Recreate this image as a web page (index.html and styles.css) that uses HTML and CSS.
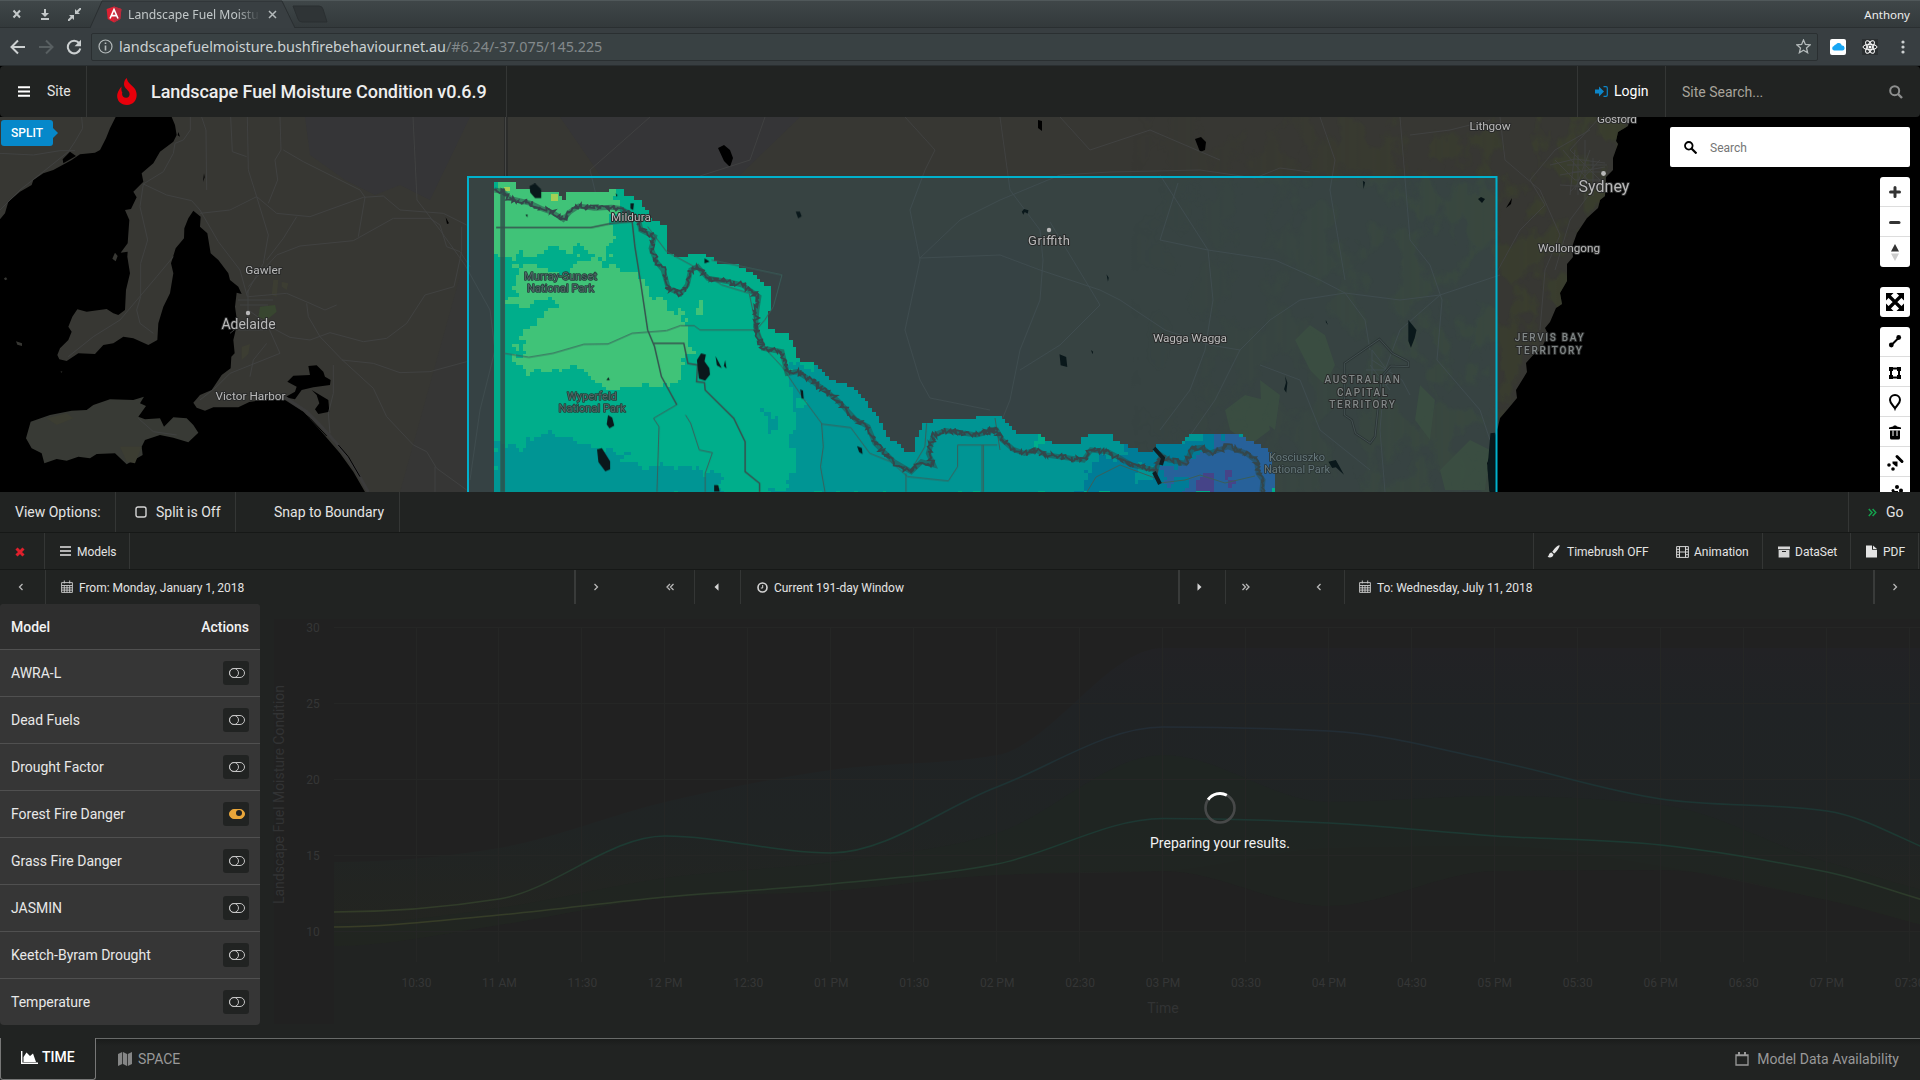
FILE: index.html
```html
<!DOCTYPE html>
<html lang="en">
<head>
<meta charset="utf-8">
<title>Landscape Fuel Moisture Condition</title>
<link rel="stylesheet" href="styles.css">
</head>
<body>
<div class="window">
  <div class="titlebar">
    <div class="win-buttons">
      <svg width="10" height="10" viewBox="0 0 10 10"><path d="M1.5 1.5l6.5 7M8 1.5l-6.5 7" stroke="#c3c8c9" stroke-width="2"/></svg>
      <svg width="10" height="12" viewBox="0 0 10 12"><path d="M5 1v6M1 11h8" stroke="#c3c8c9" stroke-width="2"/><path d="M1 5h8l-4 4z" fill="#c3c8c9"/></svg>
      <svg width="13" height="13" viewBox="0 0 13 13"><path d="M13 0L9 4M0 13l4-4" stroke="#c3c8c9" stroke-width="2"/><path d="M7 1v5h5zM1 7h5v5z" fill="#c3c8c9"/></svg>
    </div>
    <div class="tab">
      <svg class="tab-shape" width="206" height="28" viewBox="0 0 206 28"><path d="M0 28L12 1H192L205 28z" fill="#393f42"/><path d="M0 28L12 1H192L205 28" fill="none" stroke="#2a2f31"/></svg>
      <svg width="16" height="17" viewBox="0 0 16 17"><path d="M8 .5l7.4 2.6-1.1 9.8L8 16.5l-6.3-3.6L.6 3.1z" fill="#dd2032"/><path d="M8 .5l7.4 2.6-1.1 9.8L8 16.5z" fill="#b92a3c"/><path d="M4 12.5L8 3.5l4 9M5.6 9.6h4.8" fill="none" stroke="#fff" stroke-width="1.6"/></svg>
      <span class="tab-title">Landscape Fuel Moisture</span>
      <svg width="9" height="9" viewBox="0 0 9 9"><path d="M1 1l7 7M8 1L1 8" stroke="#b4babb" stroke-width="1.5"/></svg>
    </div>
    <svg class="newtab" width="36" height="18" viewBox="0 0 36 18"><path d="M1 1h26q3 0 4 3l4 13H10q-3 0-4-3z" fill="#2f3436" stroke="#2a2f31"/></svg>
    <span class="user">Anthony</span>
  </div>
  <div class="toolbar">
    <svg width="16" height="16" viewBox="0 0 16 16"><path d="M15 8H2M8 1.5L1.5 8 8 14.500" fill="none" stroke="#ccd0d1" stroke-width="2"/></svg>
    <svg width="16" height="16" viewBox="0 0 16 16"><path d="M1 8h13M8 1.500L14.500 8 8 14.500" fill="none" stroke="#585f61" stroke-width="2"/></svg>
    <svg width="16" height="16" viewBox="0 0 16 16"><path d="M13 4A6.300 6.300 0 1 0 14.300 9.500" fill="none" stroke="#ccd0d1" stroke-width="2"/><path d="M15 .8v6.400H8.600z" fill="#ccd0d1"/></svg>
    <div class="omnibox">
      <svg width="15" height="15" viewBox="0 0 15 15"><circle cx="7.500" cy="7.500" r="6.500" fill="none" stroke="#b4babb" stroke-width="1.200"/><path d="M7.500 6.500v5M7.500 3.400v1.700" stroke="#b4babb" stroke-width="1.600"/></svg>
      <span class="url">landscapefuelmoisture.bushfirebehaviour.net.au<i>/#6.24/-37.075/145.225</i></span>
      <svg width="15" height="15" viewBox="0 0 15 15"><path d="M7.500 1l1.900 4.500 4.700.4-3.600 3.100 1.100 4.700-4.100-2.500-4.100 2.500 1.100-4.700L.9 5.900l4.700-.4z" fill="none" stroke="#b4babb" stroke-width="1.300"/></svg>
    </div>
    <svg width="16" height="16" viewBox="0 0 16 16"><rect width="16" height="16" rx="2" fill="#fff"/><path d="M4 11.500a2.300 2.300 0 0 1 0-4.500 2 2 0 0 1 2-1.500 3.200 3.200 0 0 1 5.800 1 2.500 2.500 0 0 1 .5 5z" fill="#16a5f3"/></svg>
    <svg width="16" height="16" viewBox="0 0 16 16"><rect width="16" height="16" fill="#2b2f31"/><g fill="none" stroke="#fff" stroke-width="1"><ellipse cx="8" cy="8" rx="7" ry="2.700"/><ellipse cx="8" cy="8" rx="7" ry="2.700" transform="rotate(60 8 8)"/><ellipse cx="8" cy="8" rx="7" ry="2.700" transform="rotate(120 8 8)"/></g><circle cx="8" cy="8" r="1.500" fill="#fff"/></svg>
    <svg width="4" height="14" viewBox="0 0 4 14" fill="#ccd0d1"><circle cx="2" cy="2" r="1.600"/><circle cx="2" cy="7" r="1.600"/><circle cx="2" cy="12" r="1.600"/></svg>
  </div>

  <header class="header">
    <div class="site"><svg width="12" height="11" viewBox="0 0 12 11"><path d="M0 1.200h12M0 5.500h12M0 9.800h12" stroke="#fff" stroke-width="2"/></svg>Site</div>
    <div class="brand">
      <svg width="20" height="27" viewBox="0 0 20 27"><path d="M10 0c-.5 4 5 7 8 11 4 7 .5 16-8 16C2.500 27-1 21 .5 15.500 1.300 12.500 3 10.500 4.500 8.500 4.200 12 4.500 13.500 5.300 14.500c-1 3.500 1.500 5.500 4 5.300 3-.3 4-3.300 2.700-5.800C10.500 11.500 7 9.500 7 6 7 3.500 8 1 10 0z" fill="#e8000b"/></svg>
      <h1>Landscape Fuel Moisture Condition v0.6.9</h1>
    </div>
    <div class="login"><svg width="13" height="11" viewBox="0 0 13 11"><path d="M0 3.500h4V.5l5 5-5 5v-3H0z" fill="#0d86c9"/><path d="M8.500.7H11q1.300 0 1.300 1.300v7q0 1.300-1.300 1.300H8.500" fill="none" stroke="#0d86c9" stroke-width="1.200"/></svg>Login</div>
    <div class="sitesearch"><span>Site Search...</span><svg width="14" height="14" viewBox="0 0 14 14"><circle cx="5.700" cy="5.700" r="4.500" fill="none" stroke="#8d8e8e" stroke-width="2"/><path d="M9 9l4 4" stroke="#8d8e8e" stroke-width="2.400"/></svg></div>
  </header>

  <main class="map">
    <svg class="basemap" width="1920" height="375" viewBox="0 117 1920 375">
      <defs>
        <clipPath id="land"><path d="M0 117H1630L1628 126 1618 132 1616 141 1618 144 1613 158 1613 170 1606 177 1605 196 1600 200 1598 208 1587 218 1577 233 1572 247 1573 257 1567 264 1567 281 1560 293 1562 304 1556 308 1550 322 1545 328 1548 334 1541 350 1534 354 1526 363 1527 372 1516 390 1517 398 1507 410 1500 418 1498 427 1492 443 1491 452 1487 463 1490 492H0z"/></clipPath>
        <filter id="patches" x="0" y="0" width="100%" height="100%" color-interpolation-filters="sRGB"><feTurbulence type="fractalNoise" baseFrequency=".03 .022" numOctaves="4" seed="8"/><feColorMatrix values="0 0 0 0 .235 0 0 0 0 .265 0 0 0 0 .17 0 0 0 9 -4.300"/></filter>
        <linearGradient id="hills"><stop offset="0" stop-color="#fff" stop-opacity="0"/><stop offset=".5" stop-color="#fff" stop-opacity=".5"/><stop offset="1" stop-color="#fff"/></linearGradient>
        <mask id="east"><rect x="1130" y="117" width="500" height="375" fill="url(#hills)"/></mask>
      </defs>
      <rect y="117" width="1920" height="375" fill="#000"/>
      <g clip-path="url(#land)">
        <rect y="117" width="1640" height="375" fill="#373733"/>
        <path d="M305 117H470L430 200 400 185 375 195 345 180 310 155zM560 117H800L740 175H600z" fill="#353537"/>
        <path d="M470 240h560v252H400z" fill="#363635"/>
        <g mask="url(#east)"><rect x="1100" y="117" width="530" height="375" filter="url(#patches)" opacity=".6"/></g>
        <path d="M1295 340L1310 325 1325 335 1335 365 1325 385 1310 370zM1225 410L1245 395 1265 400 1270 430 1250 445 1230 430zM1260 380L1280 395 1275 430 1262 420zM1420 385L1435 400 1430 440 1415 420zM1440 470L1470 440 1490 450 1485 490H1445z" fill="#3b4532" opacity=".8"/>
      </g>
      <!-- South Australian gulfs, Kangaroo Island and the lower lakes -->
      <g transform="translate(0 110) scale(.33333)">
        <path d="M347 21L330 55 318 85 300 120 285 128 240 133 215 150 160 180 130 190 100 210 95 225 60 245 25 275 15 310 0 328V1146H1095L1060 1085 1020 1030 960 960 910 905 855 870 800 868 748 876 715 892 640 892 615 902 590 893 580 878 600 855 635 840 665 795 692 775 694 740 704 730 700 690 712 640 705 590 710 548 725 552 715 530 690 510 685 490 655 450 632 430 622 370 600 350 602 320 580 302 565 325 553 355 552 385 527 415 513 460 520 490 510 550 490 590 475 640 472 690 445 705 400 685 370 680 340 700 310 705 285 732 235 730 200 753 178 748 172 735 180 715 205 690 215 665 205 650 217 620 232 598 260 605 320 597 340 610 355 615 375 600 378 540 390 490 382 440 383 425 362 428 383 400 388 330 375 300 393 297 410 262 400 245 430 215 425 190 460 160 480 125 520 95 530 75 525 45 515 21z"/>
        <path d="M92 935L150 915 215 902 260 900 280 885 330 868 400 870 432 860 420 880 438 888 415 920 435 928 480 925 492 950 520 922 560 925 580 945 595 968 565 997 520 983 480 975 435 990 425 1010 428 1035 380 1063 345 1030 290 1032 270 1045 235 1040 200 1052 170 1047 133 1060 125 1030 95 1015 78 985z" fill="#383a35"/>
        <path d="M862 815L880 797 930 795 925 768 950 766 970 785 975 800 992 810 990 825 940 832 905 840 885 868 855 862 885 845 890 830zM935 840L985 870 988 905 955 912 945 898 958 880 950 855zM188 148L210 125 228 138 190 160zM1337 322l10 18-6 2zM612 190l2 12-5 14zM535 66l5 14-7-4z"/>
        <path d="M345 428l8 10-6 16-10-8zM48 694l18 6 0 8-14-4zM12 505l6-3 4 6-7 3zM181 785l6-1-2 4z" fill="#373733"/>
        <path d="M855 862L920 905 965 950 1010 1000 1065 1075 1105 1146" fill="none" stroke="#3b3b3b" stroke-width="9"/>
        <path d="M905 905L930 925 980 978M1015 1005L1045 1040 1080 1100" fill="none" stroke="#000" stroke-width="3"/>
        <path d="M780 590l45-5 5 20-30 25-25-10z" fill="#384630"/>
        <path d="M725 710l25-8-5 30-20 18zM820 510l15 0-5 50-15-5zM140 925l60-15 20 15-50 20zM845 515l20 5-5 20-15-10zM360 1010l65 0-20 50-25-5z" fill="#3c3d32"/>
        <g class="roads"><path d="M245 21L248 55 225 95 205 125 130 185 60 240 0 300M0 130L100 135 180 122 225 122M571 21V60L550 90 525 100 520 130 490 185 430 222 420 290 443 390 422 460 422 560 410 600 420 640 460 670M430 222L500 255 575 272 600 300 655 395 720 480 742 560M600 310L690 300 770 260 830 310 930 320 1090 262 1150 258 1200 300 1330 310 1400 345M692 21L697 125 740 140M742 21L745 180 770 260 805 375 790 460 740 550M840 21L843 120 825 150 833 210 805 280M850 120L910 155 1000 200 1080 240 1095 262 1075 380M745 530L830 435 900 408 1060 392 1180 325 1290 325 1320 345 1340 410 1380 425 1410 470M1385 350V425L1362 530 1275 555 1220 640 1160 685 1090 695 990 668 930 690 870 682 810 650M890 320L850 385 800 450M920 580L925 620 960 680 1025 748 1120 835 1160 920 1240 1005 1280 1025 1310 1075 1400 1140M1025 750L1120 760 1200 788 1290 785 1400 755M745 560L860 550 930 580 975 600 1010 585M745 600L800 640 840 730 690 790 650 830 600 870M800 700L760 750 750 800M1000 765L1000 850 985 910 990 970M205 740L280 680 360 630 470 500 520 440M690 670L715 650 800 660M605 21L618 60 620 240M1305 1070V1146M415 925L460 965 530 975"/></g>
      </g>
      <!-- lakes and highways of New South Wales -->
      <path d="M718 148l6-3 6 5 3 8-3 9-6-6zM1038 120l4 1 0 10-4-3zM1195 139l6-2 5 5-1 8-5 2zM1478 199l3-2 4 2-3 4zM1506 208l6-10-1 6M1385 116l6 0z"/>
      <g class="roads"><path d="M413 117L417 200 440 230 465 265 490 310 495 350 480 410 470 480M650 117L590 170 596 195M765 117L750 160 700 176M905 117L935 150 925 170 910 210 920 260 905 330 920 380 930 398 990 410M920 258L960 220 1000 200 1060 175 1110 172 1200 170 1255 178 1280 168 1310 172M1060 117L1090 150 1150 130 1220 160M1000 117L1010 190 1040 230 1043 260 1040 300 1022 345 1020 350 1010 400 990 450M920 258L1000 255 1040 270 1100 290 1120 300 1165 330 1210 345 1240 350 1270 320 1300 300 1345 293 1400 300 1440 295 1500 275M1160 175L1208 250 1213 300 1205 350 1190 390 1160 430M1178 183L1160 240 1208 250 1275 260 1320 280 1345 293 1365 320 1370 350M1320 117L1335 160 1330 190 1345 280M1400 117L1410 240 1430 265 1442 300 1437 360 1480 410 1490 440M1050 222L1100 305 1060 345 1020 370M1440 295L1400 330 1385 370 1380 430 1385 492M1240 350L1215 400 1180 450 1160 485M1260 365L1300 380 1320 430 1370 470M1498 270L1520 230 1545 205 1530 180 1555 150 1590 130M1500 117L1505 160 1540 190 1560 235 1545 270 1540 330M1410 135L1450 130 1490 120M1600 117L1570 150 1600 180 1570 220 1555 270"/><path d="M1550 165l25-6 30 4M1560 175l45-8M1563 150l25 30M1575 150l-5 45M1590 150l-15 40M1600 160l-30 32M1560 185l45 3M1555 160l20 20 30 0M1585 140v60M1567 165h40M1572 172h32M1578 155v40M1593 158v38M1372 350l15 20 0 15-15-10zM1372 360l30 20 8 15M1366 370h25M1370 365l20 25M238 300h35M240 305h28M248 290v30M238 330h25"/></g>
      <path d="M506 117V176" stroke="#2b2c2b" stroke-width="4"/><path d="M505.500 117V176" stroke="#464746"/>
      <rect x="468" y="177" width="1028" height="330" fill="#3bb2d0" fill-opacity=".1"/>
      <g transform="translate(980 160) scale(.3699 .33333)" fill="#0a181b"><path d="M1158 480l22 30-5 25-10 28-7-20zM215 583l18 8 3 30-18-5zM113 155l6-8 12 4-2 10-8-5-4 8zM342 343l6 10-2 12zM825 648l6 20-3 30-6-10 5-20zM300 570l6 5-2 8zM935 480l6 15-6-8zM1380 820l12-2V995h-15l-5-70zM942 905l20-5 8 16 14 28-22-22-10 2zM1035 62l6 5-4 20z"/><path d="M1080 537L985 610V765L1005 780 1015 820 1055 850 1068 830 1085 650 1110 618 1158 620 1158 605 1115 580z" fill="none" stroke="#2b3535" stroke-width="7"/><path d="M1080 537L985 610V765L1005 780 1015 820 1055 850 1068 830 1085 650 1110 618 1158 620 1158 605 1115 580z" fill="none" stroke="#4e5b5d" stroke-width="2"/></g>
      <foreignObject x="468" y="176" width="840" height="316"><canvas id="raster" width="840" height="316"></canvas></foreignObject>
      <g transform="translate(460 160) scale(.34439 .33333)">
        <path d="M124 85V996" stroke="#2a4d47" stroke-width="13" fill="none" opacity=".8"/><path d="M119 85V996M129 85V996" stroke="#405552" stroke-width="2"/>
        <g class="vicroads"><path d="M128 580L200 592 270 580 360 553 430 552 500 520 600 512 640 497H680L697 510H860L885 480 910 440 935 345 730 300M628 735L562 775 578 800 572 996M655 765L670 790 695 870 733 878 712 940V996M545 200L600 275 680 320 760 375 840 400 860 500 890 570 935 620 1000 720 1050 790 1055 860 1047 920 1060 996M1050 792L1135 803 1190 880 1250 905 1300 950 1418 963 1445 920V855H1560M1520 855V996M1310 930L1350 860 1355 790M1295 940V996"/><path class="major" d="M105 203H380L440 190 500 185 508 260 525 370 545 510 565 560 585 650 630 735M560 550H650L662 610 690 615 687 665 710 668 712 690 795 775 828 845V935L870 970V996"/></g>
        <g fill="#0a181b"><path d="M202 78l16-8 18 18 0 26-18 0-14-16zM688 600l12-20 14 4-4 20 14 20 2 20-14 18-18-6zM742 588l10 20 8 16-14-8zM770 600l4 26-8-8zM430 765l12 8 6 24-14 8-8-12zM398 868l14-4 24 40 0 24-14 6-20-28zM738 975l12 0 4 20H738zM975 155l12 0 5 14-10 6zM1153 858l14 6 2 18-10-6zM425 660l6-8 4 8zM495 130l10 0-2 20-8-4zM988 688l8 4 2 24-6 0zM710 295l15 10-15 5zM190 165l6-2 0 8zM452 100l6 6-4 4z"/></g>
      </g>
      <g class="vicroads"><path d="M982 445V492M1087 492L1096 477 1120 465 1155 478M1160 483L1185 480 1200 475 1225 483 1255 476M995 418L1000 450"/></g>
      <path id="river-halo" class="river-halo"/><path id="river" class="river"/>
      <path d="M1154 448l9 10-2 7M1154 472l6 12" fill="none" stroke="#111c20" stroke-width="4"/>
      <path d="M468 492V177H1496.500V492" fill="none" stroke="#00b1cd" stroke-width="2"/>
      <g class="labels">
        <text x="263.500" y="274" class="t12">Gawler</text>
        <circle cx="248" cy="313" r="2.200"/><text x="248.500" y="328.500" class="t14">Adelaide</text>
        <text x="250.500" y="400" class="t12" textLength="70">Victor Harbor</text>
        <text x="631" y="221" class="t12" textLength="40">Mildura</text>
        <circle cx="1049" cy="230" r="2.200"/><text x="1049" y="244.500" class="t13" textLength="42">Griffith</text>
        <text x="1190" y="342" class="t12" textLength="74">Wagga Wagga</text>
        <text x="1490" y="130" class="t12" textLength="41">Lithgow</text>
        <text x="1617" y="122.500" class="t12" textLength="40">Gosford</text>
        <circle cx="1603.500" cy="173.500" r="2.400"/><text x="1604" y="192" class="t16">Sydney</text>
        <text x="1569" y="252" class="t12" textLength="62">Wollongong</text>
        <g class="region"><text x="1550" y="341">JERVIS BAY</text><text x="1550" y="353.500">TERRITORY</text><text x="1363" y="383">AUSTRALIAN</text><text x="1363" y="395.500">CAPITAL</text><text x="1363" y="408">TERRITORY</text></g>
        <g class="park"><text x="560.500" y="280" textLength="73">Murray-Sunset</text><text x="560.500" y="292" textLength="67">National Park</text><text x="592" y="399.500" textLength="50">Wyperfeld</text><text x="592" y="411.500" textLength="67">National Park</text><g class="dim"><text x="1297" y="460.500">Kosciuszko</text><text x="1297" y="472.500" textLength="66">National Park</text></g></g>
      </g>
    </svg>
    <div class="split">SPLIT</div>
    <div class="mapsearch"><svg width="13" height="13" viewBox="0 0 13 13"><circle cx="4.800" cy="4.800" r="3.800" fill="none" stroke="#000" stroke-width="1.800"/><path d="M7.500 7.500l5 5" stroke="#000" stroke-width="2.200"/></svg><span>Search</span></div>
    <div class="controls">
      <div class="group">
        <b><svg viewBox="0 0 30 30"><path d="M15 10.500v9M10.500 15h9" stroke="#333" stroke-width="3" stroke-linecap="round"/></svg></b>
        <b><svg viewBox="0 0 30 30"><path d="M10.500 15.500h8.500" stroke="#333" stroke-width="3" stroke-linecap="round"/></svg></b>
        <b><svg viewBox="0 0 30 30"><path d="M15 7l4 7.500h-8z" fill="#333"/><path d="M15 24l4-7.500h-8z" fill="#ccc"/></svg></b>
      </div>
      <div class="group full">
        <b><svg viewBox="0 0 30 30"><path d="M8 8l14 14M22 8L8 22" stroke="#000" stroke-width="3.200"/><path d="M6 6h7.500L6 13.500zM24 6v7.500L16.500 6zM24 24h-7.500l7.500-7.500zM6 24v-7.500L13.500 24z"/></svg></b>
      </div>
      <div class="group">
        <b><svg viewBox="0 0 30 30"><path d="M11 18.500l8-8" stroke="#000" stroke-width="2"/><circle cx="11.300" cy="18" r="2.400"/><circle cx="18.700" cy="10.500" r="2.400"/></svg></b>
        <b><svg viewBox="0 0 30 30"><path d="M11 11.500h8v9h-8z" fill="none" stroke="#000" stroke-width="2"/><path d="M9 10h4v4H9zM17 10h4v4h-4zM9 18h4v4H9zM17 18h4v4h-4z"/></svg></b>
        <b><svg viewBox="0 0 30 30"><path d="M15 21.500c-1-2.500-5-4.500-5-8.500a5 5 0 0 1 10 0c0 4-4 6-5 8.500z" fill="none" stroke="#000" stroke-width="2"/></svg></b>
        <b><svg viewBox="0 0 30 30"><path d="M9 10.500l4-1 1-1h2l1 1 4 1v1.500H9zM10 13.500h10v7.500q0 1.500-1.500 1.500h-7q-1.500 0-1.500-1.500z"/><path d="M13 13.500v5.500M17 13.500v5.500" stroke="#fff"/></svg></b>
        <b><svg viewBox="0 0 30 30"><path d="M17 9.500l5 5" stroke="#000" stroke-width="3" stroke-linecap="round"/><path d="M12.500 14.500h5v5h-1.500l-3.500-3z"/><circle cx="9" cy="18" r="1.800"/><circle cx="13" cy="22" r="1.800"/></svg></b>
        <b><svg viewBox="0 0 30 30"><circle cx="17" cy="10" r="2"/><circle cx="21" cy="13.500" r="2"/><path d="M12 14h6v5h-6z"/><circle cx="13" cy="13.500" r="1.500"/></svg></b>
      </div>
    </div>
  </main>

  <div class="bar options">
    <span class="c-view">View Options:</span>
    <span class="c-split"><svg width="12" height="12" viewBox="0 0 12 12"><rect x="1" y="1" width="10" height="10" rx="2" fill="none" stroke="#d5d5d5" stroke-width="1.400"/></svg>Split is Off</span>
    <span class="c-snap">Snap to Boundary</span>
    <span class="c-go"><svg width="9" height="9" viewBox="0 0 9 9"><path d="M.8 1l3.200 3.500L.8 8M4.600 1l3.200 3.500L4.600 8" fill="none" stroke="#14a04c" stroke-width="1.500"/></svg>Go</span>
  </div>
  <div class="bar models">
    <span class="c-close"><svg width="10" height="10" viewBox="0 0 10 10"><path d="M1.500 1.500l7 7M8.500 1.500l-7 7" stroke="#e0202c" stroke-width="3"/></svg></span>
    <span class="c-models"><svg width="11" height="11" viewBox="0 0 11 11"><path d="M0 1h11M0 5h11M0 9h11" stroke="#e4e4e4" stroke-width="1.500"/></svg>Models</span>
    <span class="c-brush"><svg width="13" height="13" viewBox="0 0 13 13" fill="#e4e4e4"><path d="M12.500.3c1 .7-3.500 7.500-5.500 8.200L5.300 6.800C6.500 4.500 11-.5 12.500.3zM4.500 7.500l2 2c-.5 2.800-3.500 3.800-6 2.300 1.700-.6 1-4 4-4.300z"/></svg>Timebrush OFF</span>
    <span class="c-anim"><svg width="13" height="12" viewBox="0 0 13 12"><path d="M.6.600h11.800v10.800H.6zM3.500.600v10.800M9.500.600v10.800M3.500 6h6M.6 3.300h2.900M.6 6h2.900M.6 8.700h2.900M9.500 3.300h2.900M9.500 6h2.900M9.500 8.700h2.900" fill="none" stroke="#d5d5d5"/></svg>Animation</span>
    <span class="c-data"><svg width="12" height="12" viewBox="0 0 12 12" fill="#d5d5d5"><path d="M0 .5h12v2.700H0zM.6 4h10.800v7.500H.600z"/><path d="M4 5.500h4" stroke="#222"/></svg>DataSet</span>
    <span class="c-pdf"><svg width="11" height="13" viewBox="0 0 11 13" fill="#e4e4e4"><path d="M0 .5h6v4.200h5V12.500H0zM7 .5l4 3.500H7z"/></svg>PDF</span>
  </div>
  <div class="bar dates">
    <span class="nav line prev"><svg class="chev" viewBox="0 0 6 8"><path d="M4.500 1L1.500 4l3 3"/></svg></span>
    <span class="field wide"><svg class="cal" width="12" height="13" viewBox="0 0 12 13"><path d="M.6 2.600h10.800v9.800H.6zM.6 5.500h10.800M.6 7.800h10.800M.6 10.100h10.800M3.300 5.500v7M6 5.500v7M8.700 5.500v7M3.300.5v3M8.700.5v3" fill="none" stroke="#cfcfcf" stroke-width=".9"/></svg>From: Monday, January 1, 2018</span>
    <span class="nav next"><svg class="chev" viewBox="0 0 6 8"><path d="M1.500 1l3 3-3 3"/></svg></span>
    <span class="nav line back"><svg class="dbl" viewBox="0 0 9 8"><path d="M4 1L1 4l3 3M7.500 1l-3 3 3 3"/></svg></span>
    <span class="nav line step"><svg class="tri" viewBox="0 0 5 8"><path d="M4.500.3v7.400L.5 4z"/></svg></span>
    <span class="field mid"><svg width="11" height="11" viewBox="0 0 11 11"><circle cx="5.500" cy="5.500" r="4.500" fill="none" stroke="#d5d5d5" stroke-width="1.600"/><path d="M5.700 3v3H3.800" fill="none" stroke="#d5d5d5"/></svg>Current 191-day Window</span>
    <span class="nav line step fwdstep"><svg class="tri" viewBox="0 0 5 8"><path d="M.5.300v7.400L4.500 4z"/></svg></span>
    <span class="nav fwd"><svg class="dbl" viewBox="0 0 9 8"><path d="M1.500 1l3 3-3 3M5 1l3 3-3 3"/></svg></span>
    <span class="nav line last"><svg class="chev" viewBox="0 0 6 8"><path d="M4.500 1L1.500 4l3 3"/></svg></span>
    <span class="field wide to"><svg class="cal" width="12" height="13" viewBox="0 0 12 13"><path d="M.6 2.600h10.800v9.800H.6zM.6 5.500h10.800M.6 7.800h10.800M.6 10.100h10.800M3.300 5.500v7M6 5.500v7M8.700 5.500v7M3.300.5v3M8.700.5v3" fill="none" stroke="#cfcfcf" stroke-width=".9"/></svg>To: Wednesday, July 11, 2018</span>
    <span class="nav next"><svg class="chev" viewBox="0 0 6 8"><path d="M1.500 1l3 3-3 3"/></svg></span>
  </div>

  <section class="content">
    <aside class="sidebar">
      <div class="row head"><span>Model</span><span>Actions</span></div>
      <div class="row"><span>AWRA-L</span><button></button></div>
      <div class="row"><span>Dead Fuels</span><button></button></div>
      <div class="row"><span>Drought Factor</span><button></button></div>
      <div class="row"><span>Forest Fire Danger</span><button class="on"></button></div>
      <div class="row"><span>Grass Fire Danger</span><button></button></div>
      <div class="row"><span>JASMIN</span><button></button></div>
      <div class="row"><span>Keetch-Byram Drought</span><button></button></div>
      <div class="row"><span>Temperature</span><button></button></div>
    </aside>
    <div class="chart">
      <svg width="1660" height="434" viewBox="260 604 1660 434">
        <defs><linearGradient id="scale" gradientUnits="userSpaceOnUse" x1="0" y1="725" x2="0" y2="930"><stop offset="0" stop-color="#232c35"/><stop offset=".3" stop-color="#1d3333"/><stop offset=".6" stop-color="#1c3b32"/><stop offset=".8" stop-color="#2b3b2b"/><stop offset="1" stop-color="#3a3d26"/></linearGradient>
        <linearGradient id="band" gradientUnits="userSpaceOnUse" x1="0" y1="648" x2="0" y2="946"><stop offset="0" stop-color="#222225"/><stop offset=".2" stop-color="#202325"/><stop offset=".6" stop-color="#202424"/><stop offset="1" stop-color="#242520"/></linearGradient></defs>
        <rect x="274" y="619" width="1646" height="405" fill="#212121"/>
        <rect x="334" y="932" width="1586" height="92" fill="#212322"/>
        <path id="band-high" fill="url(#band)"/><path id="band-low" fill="#202622" opacity=".6"/>
        <g id="grid" stroke="#252625"></g>
        <path id="line-high" class="series"/><path id="line-low" class="series"/>
        <g id="ticks" class="ticks"></g>
        <text class="axis" x="1163" y="1013">Time</text>
        <text class="axis" textLength="219" transform="translate(284 794.500) rotate(-90)">Landscape Fuel Moisture Condition</text>
        <circle cx="1220" cy="808" r="14.500" fill="none" stroke="#474949" stroke-width="2.600"/>
        <path d="M1208.100 799.700A14.500 14.500 0 0 1 1226.800 795.200" fill="none" stroke="#fff" stroke-width="3"/>
        <text class="preparing" x="1220" y="848" textLength="140">Preparing your results.</text>
      </svg>
    </div>
  </section>

  <footer class="tabs">
    <div class="active"><svg width="17" height="13" viewBox="0 0 17 13"><path d="M.7 0v12.300H17" fill="none" stroke="#fff" stroke-width="1.400"/><path d="M2.500 11V6L5.500 1.500 9 5l3-2.500 3 8.500z" fill="#fff"/></svg>TIME</div>
    <div class="space"><svg width="14" height="14" viewBox="0 0 14 14" fill="#858686"><path d="M0 2L4.200 0v12L0 14zM5 0l4 2v12l-4-2zM9.800 2L14 0v12l-4.200 2z"/></svg>SPACE</div>
    <div class="avail"><svg width="14" height="14" viewBox="0 0 14 14"><path d="M1 3h12v10H1zM1 3.700h12" fill="none" stroke="#999" stroke-width="1.300"/><path d="M4 0v3.500M10 0v3.500" stroke="#999" stroke-width="2"/></svg>Model Data Availability</div>
  </footer>
</div>
<script src="app.js"></script>
</body>
</html>
```
FILE: styles.css
```css
* { box-sizing: border-box; }
body { margin: 0; background: #000; color: #e4e4e4; font-family: Roboto, sans-serif; font-size: 14px; overflow: hidden; }
svg { flex: none; display: block; }
.window { width: 1920px; height: 1080px; display: flex; flex-direction: column; overflow: hidden; }

.titlebar { height: 28px; display: flex; align-items: center; background: linear-gradient(#3f4648, #33393b); border-top: 1px solid #50585a; border-bottom: 1px solid #2a2f31; font-family: "Noto Sans", sans-serif; font-size: 12px; }
.win-buttons { display: flex; align-items: center; gap: 18px; width: 90px; padding-left: 12px; }
.tab { position: relative; width: 206px; height: 28px; display: flex; align-items: center; padding-left: 16px; color: #c2c8c9; }
.tab > * { position: relative; }
.tab .tab-shape { position: absolute; left: 0; top: 0; }
.tab-title { width: 132px; margin: 0 8px 0 6px; white-space: nowrap; overflow: hidden; font-size: 12.2px; -webkit-mask-image: linear-gradient(90deg, #000 82%, transparent); mask-image: linear-gradient(90deg, #000 82%, transparent); }
.newtab { margin-left: -4px; }
.user { margin-left: auto; padding-right: 10px; font-size: 11.5px; color: #eee; }
.toolbar { height: 38px; display: flex; align-items: center; padding: 0 15px 0 10px; background: #383e41; border-bottom: 1px solid #2a2f31; }
.toolbar > svg { margin-right: 12px; }
.omnibox { flex: 1; height: 28px; display: flex; align-items: center; border: 1px solid #2a2f31; border-radius: 2px; background: #394143; padding: 0 6px; margin: 0 12px 0 -3px; font-family: "Noto Sans", sans-serif; font-size: 14.36px; }
.omnibox ~ svg { margin-right: 16px; }
.omnibox ~ svg:last-child { margin-right: 0; margin-left: 7px; }
.url { flex: 1; margin-left: 6px; color: #ccd2d3; white-space: nowrap; }
.url i { font-style: normal; color: #83898b; }

.header { height: 51px; display: flex; background: #212322; border-radius: 4px; }
.header > div { display: flex; align-items: center; padding-bottom: 1px; }
.header .site { width: 87px; padding-left: 18px; gap: 17px; border-right: 1px solid #343635; }
.site svg { margin-top: 1px; }
.header .brand { width: 420px; padding-left: 30px; gap: 14px; border-right: 1px solid #343635; }
.brand h1 { margin: 0; font-size: 18px; font-weight: 500; letter-spacing: -.07px; color: #eee; white-space: nowrap; }
.header .login { margin-left: auto; width: 88px; padding-left: 17px; gap: 6px; border-left: 1px solid #343635; color: #fff; }
.header .sitesearch { width: 255px; padding: 0 17px 0 16px; justify-content: space-between; border-left: 1px solid #343635; color: #a8a49c; }

.map { position: relative; height: 375px; overflow: hidden; background: #000; }
.roads { fill: none; stroke: #424343; }
.roads path, .vicroads path { vector-effect: non-scaling-stroke; }
.roads path { stroke-width: .9px; }
.vicroads { fill: none; stroke: #3a5f5b; stroke-width: 1px; }
.vicroads .major { stroke: #36514e; stroke-width: 1.5px; }
.river-halo { fill: none; stroke: #2a4c4b; stroke-width: 5px; opacity: .55; }
.river { fill: none; stroke: #34464a; stroke-width: 1.7px; }
.labels { fill: #b9b9b9; text-anchor: middle; }
.labels text { paint-order: stroke; stroke: #292a2a; stroke-width: 2px; stroke-linejoin: round; }
.t12 { font-size: 11.8px; }
.t13 { font-size: 13px; }
.t14 { font-size: 14px; }
.t16 { font-size: 16px; }
.region { font-size: 10px; font-weight: 500; letter-spacing: 1.7px; fill: #818787; }
.park { font-size: 11px; fill: #506866; }
.labels .park text { stroke: #24403b; stroke-width: 1.6px; }
.labels .park .dim { fill: #66777a; }
.labels .park .dim text { stroke: #2a3435; }
.split { position: absolute; left: 1px; top: 3px; width: 52px; height: 26px; line-height: 27px; border-radius: 3px; text-align: center; background: #0688ca; color: #fff; font-size: 12px; font-weight: 500; }
.split::after { content: ""; position: absolute; right: -5px; top: 8px; border: 5px solid transparent; border-right: 0; border-left-color: #0688ca; }
.mapsearch { position: absolute; left: 1670px; top: 10px; width: 240px; height: 40px; padding: 1px 0 0 14px; display: flex; align-items: center; gap: 13px; border-radius: 2px; background: #fff; color: #757575; font-size: 12px; }
.controls { position: absolute; left: 1880px; top: 60px; width: 30px; display: flex; flex-direction: column; gap: 10px; }
.group { background: #fff; border-radius: 3px; }
.group.full { margin-top: 10px; }
.group b { display: block; height: 30px; border-bottom: 1px solid #ddd; }
.group b:last-child { border: 0; }

.bar { display: flex; background: #212322; white-space: nowrap; }
.bar span { display: flex; align-items: center; }
.options { height: 41px; border-bottom: 1px solid #161817; }
.c-view { width: 116px; padding-left: 15px; border-right: 1px solid #343635; }
.c-split { width: 120px; padding-left: 19px; gap: 9px; border-right: 1px solid #343635; }
.c-snap { width: 164px; padding-left: 38px; border-right: 1px solid #343635; }
.c-go { margin-left: auto; width: 72px; padding-left: 19px; gap: 9px; border-left: 1px solid #343635; }
.models { height: 37px; border-bottom: 1px solid #161817; font-size: 12px; padding-right: 1px; }
.bar.models span, .bar.dates .field { padding-top: 1px; }
.c-close { width: 45px; padding-left: 15px; border-right: 1px solid #343635; }
.c-models { width: 85px; padding-left: 15px; gap: 6px; border-right: 1px solid #343635; }
.c-brush { margin-left: auto; width: 129px; padding-left: 13px; gap: 7px; border-left: 1px solid #343635; }
.c-anim { width: 101px; padding-left: 14px; gap: 5px; border-right: 1px solid #343635; }
.c-data { width: 88px; padding-left: 15px; gap: 5px; border-right: 1px solid #343635; }
.c-pdf { width: 68px; padding-left: 15px; gap: 6px; border-right: 1px solid #343635; }
.dates { height: 34px; font-size: 12px; }
.nav { justify-content: center; width: 40px; }
.nav.line { border-right: 1px solid #343635; }
.nav.prev { width: 46px; padding-right: 4px; }
.nav.back { width: 49px; margin-left: 30px; }
.nav.step { width: 46px; padding-right: 2px; }
.nav.fwdstep { padding-right: 6px; }
.nav.fwd { padding-right: 2px; }
.nav.last { width: 50px; margin-left: 29px; padding-right: 1px; }
.field { padding-left: 15px; gap: 6px; border-right: 2px solid #393b3a; }
.field.wide { width: 530px; }
.field.mid { width: 439px; padding-left: 16px; }
.bar .field { letter-spacing: -.03px; }
.field .cal { margin-top: -2px; }
.field.to { padding-left: 14px; }
.chev { width: 6px; height: 8px; fill: none; stroke: #b8b8b8; stroke-width: 1.3px; }
.dbl { width: 9px; height: 8px; fill: none; stroke: #b8b8b8; stroke-width: 1.3px; }
.tri { width: 5px; height: 8px; fill: #d5d5d5; }

.content { height: 434px; display: flex; background: #212322; }
.sidebar { width: 260px; height: 421px; border-radius: 4px; overflow: hidden; background: #363636; }
.row { height: 47px; padding: 0 11px; display: flex; align-items: center; justify-content: space-between; border-bottom: 1px solid #505050; color: #e8e8e8; }
.row:last-child { border: 0; height: 46px; }
.row.head { height: 46px; background: #2e2e2e; font-weight: 500; color: #f2f2f2; }
.row button { position: relative; width: 26px; height: 24px; padding: 0; border: 0; border-radius: 3px; background: #212322; }
.row button::before, .row button::after { content: ""; position: absolute; top: 7px; height: 8px; border: 1px solid #c4c4c4; border-radius: 5px; }
.row button::before { left: 6px; width: 14px; }
.row button::after { left: 6px; width: 8px; }
.row button.on::before { border-color: #e9a63a; background: #e9a63a; }
.row button.on::after { left: 13px; width: 6px; height: 6px; top: 8px; border: 0; background: #212322; }
.chart { width: 1660px; }
.series { fill: none; stroke: url(#scale); stroke-width: 1.5px; }
.ticks { fill: #353636; font-size: 12px; text-anchor: middle; }
.axis { fill: #323334; font-size: 14px; text-anchor: middle; }
.preparing { fill: #f2f2f2; font-size: 14px; text-anchor: middle; }

.tabs { height: 42px; display: flex; background: linear-gradient(#191b1a, #212322 8px); }
.tabs > div { display: flex; align-items: center; border-top: 1px solid #686a69; }
.tabs .active { width: 96px; padding: 0 0 3px 20px; gap: 4px; border: 1px solid #777; border-top: 0; border-radius: 0 0 3px 3px; background: #212322; color: #fff; font-weight: 500; }
.tabs .space { width: 500px; padding: 0 0 1px 22px; gap: 6px; color: #999; }
.tabs .avail { flex: 1; justify-content: flex-end; padding: 0 21px 1px 0; gap: 8px; color: #999; }
```
FILE: app.js
```js
// Projections from the two digitised map sheets to page pixels
const west = (x, y) => [460 + x * 0.34439, 160 + y / 3];
const east = (x, y) => [980 + x * 0.3699, 160 + y / 3];
const pts = (s, f) => { const n = s.split(/[ ,]+/).map(Number), r = []; for (let i = 0; i < n.length; i += 2) r.push(f(n[i], n[i + 1])); return r; };
let seed = 7;
const rand = () => (seed = (seed * 16807) % 2147483647) / 2147483647;

// Smooth value noise in -1..1, so that class edges break up into clumps
const lattice = Array.from({ length: 4096 }, () => rand() * 2 - 1);
const node = (x, y) => lattice[(x * 37 + y * 101) & 4095];
function noise(x, y) {
  const i = Math.floor(x), j = Math.floor(y), u = x - i, v = y - j;
  return (node(i, j) * (1 - u) + node(i + 1, j) * u) * (1 - v) + (node(i, j + 1) * (1 - u) + node(i + 1, j + 1) * u) * v;
}

function inside(p, poly) {
  let c = false;
  for (let i = 0, j = poly.length - 1; i < poly.length; j = i++) {
    const a = poly[i], b = poly[j];
    if ((a[1] > p[1]) !== (b[1] > p[1]) && p[0] < (b[0] - a[0]) * (p[1] - a[1]) / (b[1] - a[1]) + a[0]) c = !c;
  }
  return c;
}

const extent = [
  ...pts('99,70 163,70 163,84 200,84 230,92 285,103 300,122 320,93 385,93 385,100 435,92 480,92 480,103 520,120 545,150 555,180 583,180 583,195 598,200 598,275 645,300 665,283 712,281 735,300 760,318 805,318 860,345 875,368 907,385 907,448 897,460 897,510 955,522 972,560 985,600 1020,605 1080,660 1140,680 1190,740 1220,780 1240,825 1300,880 1315,880 1330,825 1352,785 1480,778 1510,768', west),
  ...pts('0,768 60,768 100,820 160,825 205,855 270,855 275,830 300,825 355,825 370,845 440,877 465,870 480,857 545,855 565,825 640,822 665,817 700,822 745,850 785,875 790,930 798,960 798,1000', east),
  west(99, 1000)
];
const layers = [
  ['#40c378', pts('90,60 450,60 455,130 440,180 465,190 455,230 440,250 420,280 380,285 370,265 260,265 230,295 140,290 90,290', west)],
  ['#40c378', pts('150,310 240,330 300,350 330,320 370,290 430,310 500,320 540,370 580,410 600,450 655,490 660,540 690,580 650,620 640,650 580,690 520,670 480,680 450,690 400,660 370,630 300,625 200,630 175,620 165,560 200,520 240,490 270,450 285,425 240,415 190,440 160,430 145,410 165,390 150,350', west)],
  ['#40c378', pts('640,440 660,430 665,465 640,465', west)],
  ['#40c378', pts('680,432 702,430 702,465 682,462', west)],
  ['#009594', pts('90,840 180,860 240,825 330,835 380,860 480,880 530,920 600,925 680,920 730,930 760,960 770,1010 90,1010', west)],
  ['#009594', pts('940,610 1020,640 1060,600 3000,600 3000,1010 860,1010 940,975 975,920 960,870 985,800 985,700 950,650', west)],
  ['#009594', pts('870,740 905,740 910,820 890,820 890,770', west)],
  ['#00ae8b', pts('145,830 175,830 175,855 150,850', east)],
  ['#007c97', pts('262,1010 285,945 330,920 300,880 370,890 395,850 470,870 560,830 640,822 810,840 810,1010', east)],
  ['#009594', pts('410,900 460,920 455,970 425,970', east)],
  ['#27619a', pts('510,940 570,900 600,880 640,860 650,810 700,810 810,860 810,1010 545,1010 560,970 510,960', east)],
  ['#464488', pts('600,950 632,950 625,1010 583,1010', east)],
  ['#464488', pts('658,905 677,905 677,962 658,962', east)]
];
const ctx = document.getElementById('raster').getContext('2d');
const cell = 3.6;
for (let y = 178, r = 0; y < 492; y += cell, r++) {
  for (let x = 494, c = 0; x < 1290; x += cell, c++) {
    if (!inside([x + 2, y + 2], extent)) continue;
    const jx = noise(c / 2.3, r / 2.3) * 9 + (rand() - 0.5) * 4;
    const jy = noise(c / 2.3 + 40, r / 2.3 + 17) * 7 + (rand() - 0.5) * 4;
    let color = '#00ae8b';
    for (const [fill, poly] of layers) if (inside([x + 2 + jx, y + 2 + jy], poly)) color = fill;
    ctx.fillStyle = color;
    const px = Math.round(x - 468), py = Math.round(y - 176);
    ctx.fillRect(px, py, Math.round(x + cell - 468) - px, Math.round(y + cell - 176) - py);
  }
}
ctx.fillStyle = '#a4cf55';
ctx.fillRect(83, 18, 7, 7);
ctx.fillRect(36, 11, 6, 4);

// The Murray meanders: fine zigzag along the course of the river
const course = [
  ...pts('100,90 125,95 145,115 205,130 235,145 270,158 300,178 320,155 345,138 390,145 440,142 465,145 500,165 520,185 525,210 565,230 555,265 570,305 590,330 605,385 640,402 660,375 670,330 690,320 720,355 780,365 820,375 868,410 862,450 858,500 880,565 935,575 950,640 980,635 1060,690 1100,725 1150,780 1185,800 1205,850 1260,905 1310,935 1340,905 1375,915 1360,880 1375,825 1410,812 1500,825 1560,808', west),
  ...pts('20,810 45,810 60,840 90,868 120,880 150,870 180,885 280,900 300,870 345,875 380,895 410,915 450,925 475,930 490,885 510,900 555,910 575,865 600,862 620,880 670,860 720,880 748,905 752,940 765,960 762,995', east)
];
let d = 'M' + course[0];
for (let i = 1; i < course.length; i++) {
  const [ax, ay] = course[i - 1], [bx, by] = course[i], n = Math.max(1, Math.round(Math.hypot(bx - ax, by - ay) / 1.3));
  for (let k = 1; k <= n; k++) d += `L${(ax + (bx - ax) * k / n + (rand() - 0.5) * 6).toFixed(1)} ${(ay + (by - ay) * k / n + (rand() - 0.5) * 6).toFixed(1)}`;
}
document.getElementById('river').setAttribute('d', d);
document.getElementById('river-halo').setAttribute('d', 'M' + course.join('L'));

// Chart
function curve(p) {
  const m = p.map((q, i) => {
    if (i === 0 || i === p.length - 1) return 0;
    const a = (q[1] - p[i - 1][1]) / (q[0] - p[i - 1][0]), b = (p[i + 1][1] - q[1]) / (p[i + 1][0] - q[0]);
    return a * b <= 0 ? 0 : Math.sign(a) * Math.min(Math.abs(a + b) / 2, 2 * Math.abs(a), 2 * Math.abs(b));
  });
  let s = '' + p[0];
  for (let i = 1; i < p.length; i++) {
    const h = (p[i][0] - p[i - 1][0]) / 3;
    s += `C${p[i - 1][0] + h} ${p[i - 1][1] + h * m[i - 1]} ${p[i][0] - h} ${p[i][1] - h * m[i]} ${p[i]}`;
  }
  return s;
}
const hours = [334, 499, 665, 831, 997, 1163, 1329, 1495, 1661, 1827, 1993];
const series = ys => hours.map((x, i) => [x, ys[i]]);
const band = (top, bottom) => 'M' + curve(series(top)) + 'L' + curve(series(bottom).reverse()) + 'Z';
document.getElementById('band-high').setAttribute('d', band([862, 848, 802, 770, 755, 648, 648, 648, 648, 648, 648], [946, 925, 898, 891, 875, 871, 848, 846, 866, 900, 935]));
document.getElementById('band-low').setAttribute('d', band([924, 908, 878, 862, 833, 755, 802, 796, 805, 862, 900], [946, 925, 898, 891, 875, 871, 906, 871, 870, 900, 935]));
document.getElementById('line-high').setAttribute('d', 'M' + curve(series([912, 899, 836, 853, 787, 727, 731, 761, 799, 811, 866])));
document.getElementById('line-low').setAttribute('d', 'M' + curve(series([927, 915, 897, 884, 864, 818.5, 823, 836, 845, 872, 912])));
let grid = '', ticks = '';
['10:30', '11 AM', '11:30', '12 PM', '12:30', '01 PM', '01:30', '02 PM', '02:30', '03 PM', '03:30', '04 PM', '04:30', '05 PM', '05:30', '06 PM', '06:30', '07 PM', '07:30'].forEach((t, i) => {
  const x = 416.5 + i * 82.95;
  grid += `<path d="M${Math.round(x) - 0.5} 628V962"/>`;
  ticks += `<text x="${x}" y="987">${t}</text>`;
});
[30, 25, 20, 15, 10].forEach((t, i) => {
  const y = 628 + i * 75.9;
  grid += `<path d="M334 ${Math.round(y) - 0.5}H1920"/>`;
  ticks += `<text x="313" y="${y + 4}">${t}</text>`;
});
document.getElementById('grid').innerHTML = grid;
document.getElementById('ticks').innerHTML = ticks;
```
